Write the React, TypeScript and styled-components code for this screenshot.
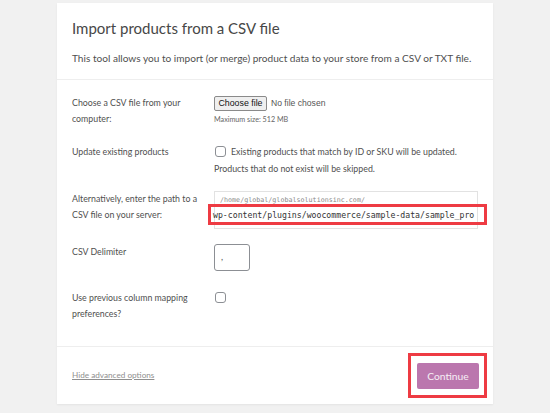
import React from "react";
import styled, { createGlobalStyle } from "styled-components";

const Global = createGlobalStyle`
  html, body { margin: 0; padding: 0; background: #f1f1f1; }
  body { font-family: Lato, "Open Sans", sans-serif; color: #4a4a4a; }
`;

const Page = styled.div`
  width: 550px;
  height: 413px;
  padding: 3px 0 0 57px;
  box-sizing: border-box;
`;

const Card = styled.div`
  width: 436px;
  height: 401px;
  background: #fff;
  box-shadow: 0 1px 2px rgba(0, 0, 0, 0.06);
  display: flex;
  flex-direction: column;
`;

const Header = styled.div`
  padding: 14px 15px 0 15px;
  height: 77px;
  box-sizing: border-box;
  border-bottom: 1px solid #eeeeee;
`;

const Title = styled.h2`
  margin: 0;
  font-size: 15px;
  font-weight: 400;
  line-height: 22px;
  color: #474747;
`;

const Intro = styled.p`
  margin: 11px 0 0 0;
  font-size: 10.1px;
  line-height: 16px;
  color: #4f4f4f;
  white-space: nowrap;
`;

const Form = styled.div`
  flex: 1;
  padding: 15px 15px 0 15px;
  border-bottom: 1px solid #eeeeee;
`;

const Row = styled.div<{ $gap: number }>`
  display: grid;
  grid-template-columns: 142px 1fr;
  margin-bottom: ${(p) => p.$gap}px;
`;

const Label = styled.div`
  font-size: 8.8px;
  line-height: 15.5px;
  color: #4f4f4f;
  max-width: 128px;
`;

const Field = styled.div`
  display: flex;
  flex-direction: column;
  font-size: 8.8px;
  color: #4f4f4f;
`;

const FileLine = styled.div`
  display: flex;
  align-items: center;
  gap: 4px;
  height: 16px;
  font-family: "Liberation Sans", Arial, sans-serif;
  font-size: 8.6px;
  color: #555;
`;

const FileButton = styled.span`
  display: inline-flex;
  align-items: center;
  justify-content: center;
  box-sizing: border-box;
  width: 53px;
  height: 15px;
  border: 1px solid #8a8a8a;
  border-radius: 2px;
  background: #efefef;
  color: #111;
  font-size: 8.8px;
`;

const Hint = styled.div`
  margin-top: 4px;
  font-size: 7.2px;
  line-height: 10px;
  color: #666;
`;

const CheckLine = styled.div`
  display: flex;
  align-items: center;
  gap: 5px;
  height: 15px;
  line-height: 15px;
  white-space: nowrap;
`;

const Checkbox = styled.span`
  display: inline-block;
  flex: none;
  width: 9px;
  height: 9px;
  border: 1px solid #8c8f94;
  border-radius: 3px;
  background: #fff;
  margin-left: 1px;
`;

const SubText = styled.div`
  margin-top: 2px;
  line-height: 16px;
`;

const PathBox = styled.div`
  position: relative;
  width: 264px;
  height: 38px;
  box-sizing: border-box;
  border: 1px solid #e2e2e2;
  padding: 3px 0 0 5px;
  font-family: "DejaVu Sans Mono", "Liberation Mono", monospace;
`;

const PathPrefix = styled.div`
  font-size: 6.7px;
  line-height: 10px;
  color: #8a8a8a;
`;

const Highlight = styled.span<{ $top: number; $left: number; $w: number; $h: number }>`
  position: absolute;
  top: ${(p) => p.$top}px;
  left: ${(p) => p.$left}px;
  width: ${(p) => p.$w}px;
  height: ${(p) => p.$h}px;
  box-sizing: border-box;
  border: 3px solid #ee3b43;
  display: flex;
  align-items: center;
  padding-left: 2px;
  pointer-events: none;
`;

const PathValue = styled.span`
  font-family: "DejaVu Sans Mono", "Liberation Mono", monospace;
  font-size: 8.2px;
  line-height: 14px;
  color: #333;
  white-space: nowrap;
`;

const DelimBox = styled.div`
  width: 36px;
  height: 27px;
  box-sizing: border-box;
  border: 1px solid #8c8f94;
  border-radius: 3px;
  padding: 7px 0 0 6px;
  font-size: 9px;
  line-height: 10px;
  color: #555;
`;

const Footer = styled.div`
  height: 57px;
  display: flex;
  align-items: center;
  justify-content: space-between;
  padding: 0 14px 0 15px;
`;

const HideLink = styled.a`
  font-size: 8.2px;
  color: #8f8f8f;
  text-decoration: underline;
  margin-top: -2px;
`;

const ButtonWrap = styled.div`
  position: relative;
`;

const ContinueButton = styled.button`
  width: 62px;
  height: 26px;
  border: none;
  border-radius: 2px;
  background: #bb77ae;
  color: #f6eef5;
  font-family: Lato, "Open Sans", sans-serif;
  font-size: 10.3px;
  padding: 0;
  margin-top: 1px;
`;

export default function App() {
  return (
    <>
      <Global />
      <Page>
        <Card>
          <Header>
            <Title>Import products from a CSV file</Title>
            <Intro>
              This tool allows you to import (or merge) product data to your store from a CSV or TXT file.
            </Intro>
          </Header>
          <Form>
            <Row $gap={18}>
              <Label>Choose a CSV file from your computer:</Label>
              <Field>
                <FileLine>
                  <FileButton>Choose file</FileButton>
                  <span>No file chosen</span>
                </FileLine>
                <Hint>Maximum size: 512 MB</Hint>
              </Field>
            </Row>
            <Row $gap={14}>
              <Label>Update existing products</Label>
              <Field>
                <CheckLine>
                  <Checkbox />
                  <span>Existing products that match by ID or SKU will be updated.</span>
                </CheckLine>
                <SubText>Products that do not exist will be skipped.</SubText>
              </Field>
            </Row>
            <Row $gap={15}>
              <Label>Alternatively, enter the path to a CSV file on your server:</Label>
              <Field>
                <PathBox>
                  <PathPrefix>/home/global/globalsolutionsinc.com/</PathPrefix>
                  <Highlight $top={12} $left={-7} $w={279} $h={21}>
                    <PathValue>wp-content/plugins/woocommerce/sample-data/sample_pro</PathValue>
                  </Highlight>
                </PathBox>
              </Field>
            </Row>
            <Row $gap={19}>
              <Label>CSV Delimiter</Label>
              <Field>
                <DelimBox>,</DelimBox>
              </Field>
            </Row>
            <Row $gap={0}>
              <Label>Use previous column mapping preferences?</Label>
              <Field>
                <CheckLine>
                  <Checkbox />
                </CheckLine>
              </Field>
            </Row>
          </Form>
          <Footer>
            <HideLink>Hide advanced options</HideLink>
            <ButtonWrap>
              <ContinueButton>Continue</ContinueButton>
              <Highlight $top={-9} $left={-9} $w={79} $h={45} />
            </ButtonWrap>
          </Footer>
        </Card>
      </Page>
    </>
  );
}
